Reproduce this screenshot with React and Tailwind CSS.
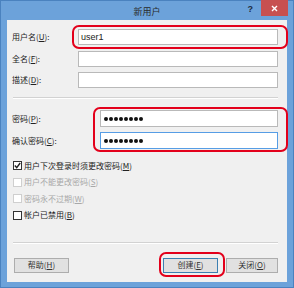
import React from "react";

const font = { fontFamily: '"Noto Sans CJK SC", "Liberation Sans", sans-serif' };

// label with an underlined access key, e.g. 用户名(U):
const Label = ({ text, hotkey, colon = true, className = "" }) => (
  <span className={`whitespace-nowrap ${className}`}>
    {text}(<span className="underline underline-offset-1">{hotkey}</span>){colon ? ":" : ""}
  </span>
);

const Input = ({ children, focused }) => (
  <div
    className={`flex-1 h-full bg-white border flex items-center pl-[2px] ${
      focused ? "border-[#569de5]" : "border-[#b9b9b9]"
    }`}
  >
    {children}
  </div>
);

const Dots = () => (
  <div className="flex gap-[1px] pl-[1px]">
    {Array.from({ length: 8 }).map((_, i) => (
      <div key={i} className="w-[4px] h-[4px] rounded-full bg-[#111]" />
    ))}
  </div>
);

const Checkbox = ({ checked, disabled, text, hotkey }) => (
  <div className="flex items-center h-[16.5px]">
    <div
      className={`w-[9px] h-[9px] border bg-white flex items-center justify-center ${
        disabled ? "border-[#cfcfcf] bg-[#f4f4f4]" : "border-[#333]"
      }`}
    >
      {checked && (
        <svg width="7" height="7" viewBox="0 0 7 7">
          <polyline points="0.8,3.6 2.7,5.6 6.2,1" fill="none" stroke="#222" strokeWidth="1.4" />
        </svg>
      )}
    </div>
    <Label
      text={text}
      hotkey={hotkey}
      colon={false}
      className={`ml-[2px] ${disabled ? "text-[#a8a8a8]" : "text-[#222]"}`}
    />
  </div>
);

const Separator = ({ className = "" }) => (
  <div className={`h-[2px] border-t border-[#d2d2d2] border-b border-b-white ${className}`} />
);

const Button = ({ text, hotkey, primary, className = "" }) => (
  <div
    className={`h-[15px] bg-[#e1e1e1] border flex items-center justify-center text-[#333] ${
      primary ? "border-[#3c7fb1]" : "border-[#adadad]"
    } ${className}`}
  >
    <Label text={text} hotkey={hotkey} colon={false} />
  </div>
);

export default function App() {
  return (
    <div
      className="relative w-[294px] h-[288px] bg-[#6ca2da] border border-[#4a82bf] flex flex-col text-[8px] leading-none text-[#222]"
      style={font}
    >
      {/* title bar */}
      <div className="h-[19px] grid grid-cols-[1fr_auto_1fr] items-start">
        <div />
        <div className="pt-[6px] text-[9px] text-[#2a2a2a]">新用户</div>
        <div className="flex justify-end items-start">
          <span className="mt-[4px] mr-[8px] text-[9px] font-bold text-[#1c2c40]" style={{ fontFamily: '"Liberation Sans", sans-serif' }}>?</span>
          <div className="w-[27px] h-[16px] bg-[#c75050] flex items-center justify-center mr-[5px] -mt-[1px]">
            <svg width="7" height="7" viewBox="0 0 7 7">
              <path d="M1 1 L6 6 M6 1 L1 6" stroke="#fff" strokeWidth="1.4" />
            </svg>
          </div>
        </div>
      </div>

      {/* dialog body */}
      <div className="flex-1 mx-[6px] mb-[5px] bg-[#f0f0f0] flex flex-col pl-[6px] pr-[9px]">
        <div className="flex items-center h-[16px] mt-[9px]">
          <Label text="用户名" hotkey="U" className="w-[66px] -ml-[1px] pl-0" />
          <Input>
            <span className="text-[9px] text-[#222]" style={{ fontFamily: '"Liberation Sans", sans-serif' }}>user1</span>
          </Input>
        </div>
        <div className="flex items-center h-[16px] mt-[6px]">
          <Label text="全名" hotkey="F" className="w-[66px] -ml-[1px]" />
          <Input />
        </div>
        <div className="flex items-center h-[16px] mt-[5px]">
          <Label text="描述" hotkey="D" className="w-[66px] -ml-[1px]" />
          <Input />
        </div>

        <Separator className="mt-[9px]" />

        <div className="flex items-center h-[17px] mt-[11px]">
          <Label text="密码" hotkey="P" className="w-[88px] -ml-[1px]" />
          <Input>
            <Dots />
          </Input>
        </div>
        <div className="flex items-center h-[17px] mt-[5px]">
          <Label text="确认密码" hotkey="C" className="w-[88px] -ml-[1px]" />
          <Input focused>
            <Dots />
          </Input>
        </div>

        <div className="flex flex-col mt-[8.5px]">
          <Checkbox checked text="用户下次登录时须更改密码" hotkey="M" />
          <Checkbox disabled text="用户不能更改密码" hotkey="S" />
          <Checkbox disabled text="密码永不过期" hotkey="W" />
          <Checkbox text="帐户已禁用" hotkey="B" />
        </div>

        <Separator className="mt-[18.5px]" />

        <div className="flex items-center mt-[13.5px]">
          <Button text="帮助" hotkey="H" className="w-[55px] ml-[1px]" />
          <div className="flex-1" />
          <Button text="创建" hotkey="E" primary className="w-[55px]" />
          <Button text="关闭" hotkey="O" className="w-[52px] ml-[8px]" />
        </div>
      </div>

      {/* red annotation outlines */}
      <div className="absolute left-[71px] top-[24px] w-[216px] h-[24px] border-2 border-[#e3001b] rounded-[7px]" />
      <div className="absolute left-[92px] top-[106px] w-[195px] h-[45px] border-2 border-[#e3001b] rounded-[7px]" />
      <div className="absolute left-[158px] top-[251px] w-[66px] h-[25px] border-2 border-[#e3001b] rounded-[7px]" />
    </div>
  );
}
